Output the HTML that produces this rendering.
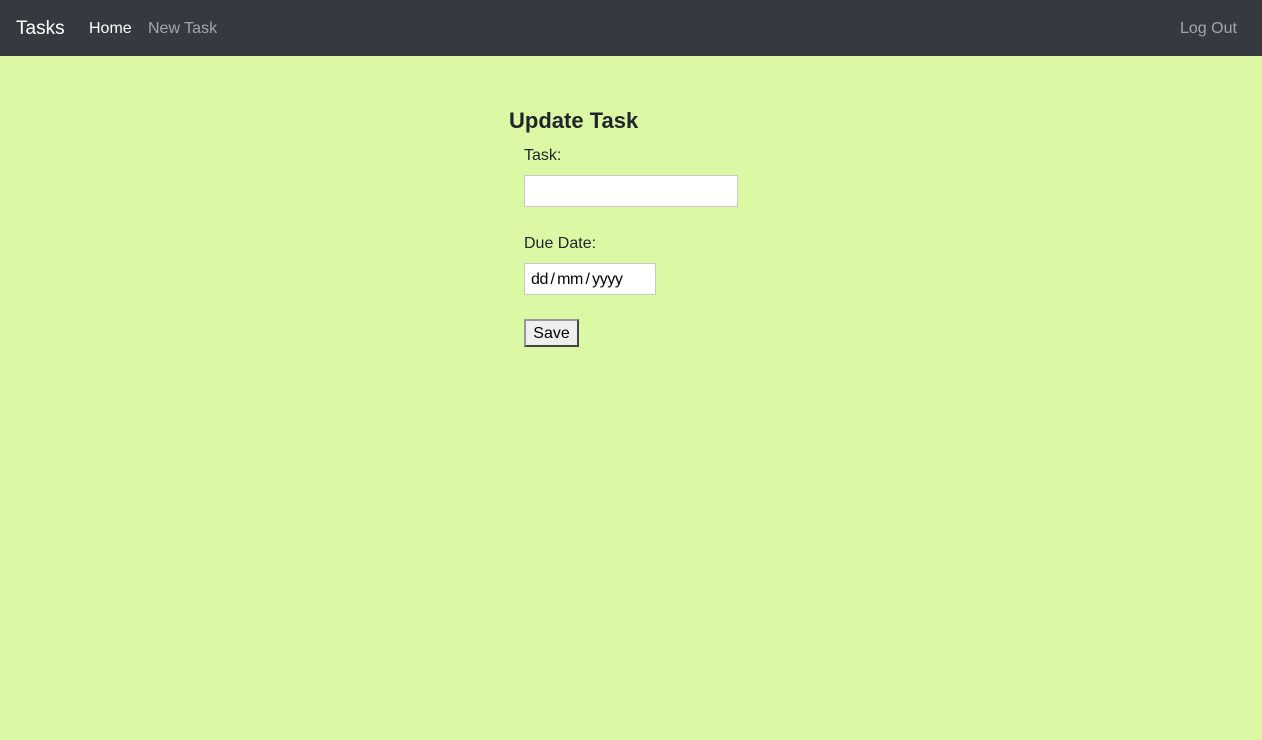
<!DOCTYPE html>
<html><head><style>
body{margin:0;background:#dbf8a5;font-family:"Liberation Sans",sans-serif;color:#212529;width:1262px;height:740px;overflow:hidden;position:relative}
nav{height:56px;background:#343a40;position:relative}
nav span{position:absolute;top:19px;font-size:16px;line-height:20px}
.abs{position:absolute;line-height:1}
.box{position:absolute background:#fff;border:1px solid #c8c8c8;box-sizing:border-box}
.box{position:absolute;background:#fff;border:1px solid #c8c8c8;box-sizing:border-box}
</style></head><body>
<nav>
<span style="left:16px;top:18px;font-size:19px;color:#fff;line-height:22px">Tasks</span>
<span style="left:89px;color:#fff">Home</span>
<span style="left:148px;color:rgba(255,255,255,.55)">New Task</span>
<span style="left:1180px;color:rgba(255,255,255,.55)">Log Out</span>
</nav>
<div class="abs" style="left:509px;top:110px;font-size:22px;font-weight:bold">Update Task</div>
<div class="abs" style="left:524px;top:148px;font-size:16px">Task:</div>
<div class="box" style="left:524px;top:175px;width:214px;height:32px"></div>
<div class="abs" style="left:524px;top:236px;font-size:16px">Due Date:</div>
<div class="box" style="left:524px;top:263px;width:132px;height:32px"></div>
<div class="abs" style="left:531px;top:272px;font-size:16px;color:#000;letter-spacing:-0.4px;word-spacing:-1.5px">dd / mm / yyyy</div>
<div class="abs" style="left:524px;top:319px;width:55px;height:28px;box-sizing:border-box;background:#efefef;border:2px outset #999;font-size:16px;color:#000;text-align:center;line-height:25px">Save</div>
</body></html>
